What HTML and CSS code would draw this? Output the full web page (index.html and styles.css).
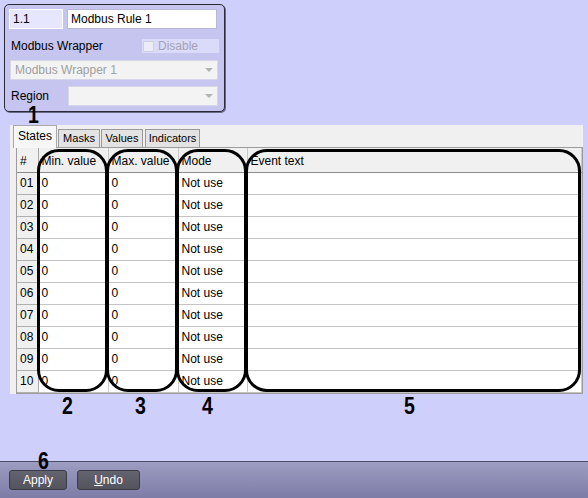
FILE: index.html
```html
<!DOCTYPE html>
<html>
<head>
<meta charset="utf-8">
<link rel="stylesheet" href="styles.css">
</head>
<body>
<div class="page">
  <div class="panel">
    <div class="row1">
      <div class="inp inp-id">1.1</div>
      <div class="inp inp-name">Modbus Rule 1</div>
    </div>
    <div class="row2">
      <span class="lbl">Modbus Wrapper</span>
      <div class="chk"><span class="box"></span><span>Disable</span></div>
    </div>
    <div class="combo combo-wide"><span>Modbus Wrapper 1</span><span class="arrow"></span></div>
    <div class="row4">
      <span class="lbl">Region</span>
      <div class="combo combo-region"><span></span><span class="arrow"></span></div>
    </div>
  </div>

  <div class="tabs">
    <div class="tabstrip">
      <div class="tab active">States</div>
      <div class="tab t-masks">Masks</div>
      <div class="tab t-values">Values</div>
      <div class="tab t-ind">Indicators</div>
    </div>
    <div class="grid">
      <table>
        <colgroup>
          <col class="c-num"><col class="c-min"><col class="c-max"><col class="c-mode"><col>
        </colgroup>
        <thead>
          <tr><th class="num">#</th><th>Min. value</th><th>Max. value</th><th>Mode</th><th>Event text</th></tr>
        </thead>
        <tbody>
          <tr><td class="num">01</td><td>0</td><td>0</td><td>Not use</td><td></td></tr>
          <tr><td class="num">02</td><td>0</td><td>0</td><td>Not use</td><td></td></tr>
          <tr><td class="num">03</td><td>0</td><td>0</td><td>Not use</td><td></td></tr>
          <tr><td class="num">04</td><td>0</td><td>0</td><td>Not use</td><td></td></tr>
          <tr><td class="num">05</td><td>0</td><td>0</td><td>Not use</td><td></td></tr>
          <tr><td class="num">06</td><td>0</td><td>0</td><td>Not use</td><td></td></tr>
          <tr><td class="num">07</td><td>0</td><td>0</td><td>Not use</td><td></td></tr>
          <tr><td class="num">08</td><td>0</td><td>0</td><td>Not use</td><td></td></tr>
          <tr><td class="num">09</td><td>0</td><td>0</td><td>Not use</td><td></td></tr>
          <tr><td class="num">10</td><td>0</td><td>0</td><td>Not use</td><td></td></tr>
        </tbody>
      </table>
      <div class="oval oval-2"></div>
      <div class="oval oval-3"></div>
      <div class="oval oval-4"></div>
      <div class="oval oval-5"></div>
    </div>
  </div>

  <div class="bottombar">
    <button class="btn btn-apply">Apply</button>
    <button class="btn btn-undo"><u>U</u>ndo</button>
  </div>

  <span class="mark m1">1</span>
  <span class="mark m2">2</span>
  <span class="mark m3">3</span>
  <span class="mark m4">4</span>
  <span class="mark m5">5</span>
  <span class="mark m6">6</span>
</div>
</body>
</html>
```
FILE: styles.css
```css
html, body {
  margin: 0;
  padding: 0;
}
body {
  background: #cfcffc;
  font-family: "Liberation Sans", Arial, sans-serif;
  font-size: 12px;
  color: #000;
}
.page {
  position: relative;
  width: 588px;
  height: 498px;
  display: flex;
  flex-direction: column;
  overflow: hidden;
}

/* top panel */
.panel {
  box-sizing: border-box;
  width: 221px;
  height: 108px;
  margin: 4px 0 0 4px;
  border: 1px solid #2a2a3a;
  border-radius: 5px;
  box-shadow: 1px 1px 0 #6a6a8a;
  background: #c5c5ef;
  padding: 4px 6px 0 4px;
  display: flex;
  flex-direction: column;
}
.row1 {
  display: flex;
  gap: 4px;
  height: 20px;
}
.inp {
  box-sizing: border-box;
  height: 20px;
  line-height: 18px;
  padding-left: 3px;
  font-size: 12px;
}
.inp-id {
  width: 54px;
  background: #e6e6fe;
  border: 1px solid #ffffff;
}
.inp-name {
  width: 150px;
  background: #ffffff;
  border: 1px solid #b8b8d8;
}
.row2 {
  display: flex;
  align-items: center;
  justify-content: space-between;
  margin-top: 10px;
  height: 14px;
}
.lbl {
  padding-left: 2px;
  color: #000;
}
.chk {
  width: 77px;
  height: 14px;
  background: #dadafa;
  display: flex;
  align-items: center;
  gap: 4px;
  color: #a4a4b4;
  margin-right: -1px;
}
.box {
  box-sizing: border-box;
  width: 11px;
  height: 11px;
  margin-left: 1px;
  background: #ececf4;
  border: 1px solid #d0d0e0;
}
.combo {
  box-sizing: border-box;
  height: 20px;
  background: #f3f3f3;
  border: 1px solid #d6d6e6;
  display: flex;
  align-items: center;
  justify-content: space-between;
  padding: 0 4px 0 4px;
  color: #a0a0a0;
}
.combo-wide {
  width: 208px;
  margin-top: 7px;
  margin-left: 1px;
}
.arrow {
  width: 0;
  height: 0;
  border-left: 4px solid transparent;
  border-right: 4px solid transparent;
  border-top: 4px solid #b4b4b4;
}
.row4 {
  display: flex;
  align-items: center;
  justify-content: space-between;
  margin-top: 6px;
  height: 20px;
}
.combo-region {
  width: 150px;
}

/* tabs */
.tabs {
  box-sizing: border-box;
  width: 573px;
  height: 269px;
  margin: 13px 0 0 10px;
  background: #f0f0f0;
  display: flex;
  flex-direction: column;
}
.tabstrip {
  display: flex;
  align-items: flex-end;
  height: 22px;
  padding-left: 3px;
}
.tab {
  box-sizing: border-box;
  height: 18px;
  line-height: 16px;
  font-size: 11px;
  text-align: center;
  background: #e3e3e3;
  border: 1px solid #9a9a9a;
  border-bottom: none;
  margin-right: 1px;
}
.tab.active {
  width: 44px;
  height: 23px;
  line-height: 21px;
  font-size: 12px;
  background: #f7f7f7;
  border-color: #a8a8a8;
  margin-bottom: -1px;
  position: relative;
  z-index: 1;
}
.t-masks { width: 42px; }
.t-values { width: 42px; }
.t-ind { width: 55px; margin-left: 1px; }
.grid {
  position: relative;
  box-sizing: border-box;
  width: 567px;
  height: 247px;
  margin-left: 6px;
  border: 1px solid #9c9c9c;
  background: #ffffff;
}
table {
  border-collapse: collapse;
  table-layout: fixed;
  width: 565px;
}
.c-num { width: 21px; }
.c-min { width: 70px; }
.c-max { width: 70px; }
.c-mode { width: 69px; }
th, td {
  box-sizing: border-box;
  padding: 0 0 0 3px;
  text-align: left;
  font-weight: normal;
  white-space: nowrap;
  overflow: hidden;
  border-right: 1px solid #cacaca;
  border-bottom: 1px solid #c4c4c4;
}
th {
  height: 24px;
  padding-top: 2px;
  background: #f0f0f0;
  border-bottom: 1px solid #8c8c8c;
  border-right: 1px solid #c8c8c8;
}
td {
  height: 22px;
}
.num {
  background: #f0f0f0;
  border-right: 1px solid #a8a8a8;
  padding-left: 3px;
}
td.num {
  border-bottom: 1px solid #b0b0b0;
}

/* annotation ovals */
.oval {
  position: absolute;
  box-sizing: border-box;
  top: 1px;
  height: 243px;
  border: 3px solid #000;
  border-radius: 22px;
}
.oval-2 { left: 20px; width: 71px; }
.oval-3 { left: 89px; width: 72px; }
.oval-4 { left: 159px; width: 71px; }
.oval-5 { left: 228px; width: 336px; }

/* bottom bar */
.bottombar {
  margin-top: auto;
  box-sizing: border-box;
  height: 37px;
  border-top: 1px solid #4c4c66;
  background: linear-gradient(#9d9dc3, #7c7ca6);
  display: flex;
  align-items: flex-start;
  gap: 10px;
  padding: 8px 0 0 9px;
}
.btn {
  box-sizing: border-box;
  height: 20px;
  border: 1px solid #3a3a48;
  border-radius: 3px;
  background: linear-gradient(#63636f, #54545f);
  color: #ffffff;
  font-family: "Liberation Sans", Arial, sans-serif;
  font-size: 12px;
  padding: 0;
  margin: 0;
}
.btn-apply { width: 58px; }
.btn-undo { width: 63px; }

/* annotation numbers */
.mark {
  position: absolute;
  font-family: "Liberation Sans", Arial, sans-serif;
  font-weight: bold;
  font-size: 23px;
  line-height: 20px;
  color: #000;
  transform: scaleX(0.85);
}
.m1 { left: 27px; top: 105px; }
.m2 { left: 61px; top: 396px; }
.m3 { left: 134px; top: 396px; }
.m4 { left: 201px; top: 396px; }
.m5 { left: 403px; top: 396px; }
.m6 { left: 37px; top: 451px; }
```
